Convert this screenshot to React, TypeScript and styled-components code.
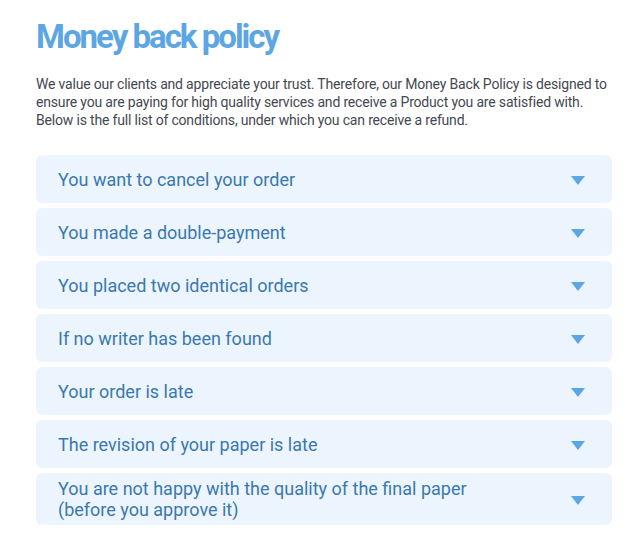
import React from "react";
import styled, { createGlobalStyle } from "styled-components";

const Global = createGlobalStyle`
  html, body { margin: 0; padding: 0; background: #fff; }
  body { font-family: Roboto, "Liberation Sans", Arial, sans-serif; }
`;

const Page = styled.div`
  padding: 16px 27px 0 36px;
`;

const Title = styled.h1`
  margin: 0;
  font-size: 33px;
  line-height: 42px;
  font-weight: 700;
  color: #5ba6e3;
  letter-spacing: -2px;
`;

const Intro = styled.p`
  margin: 17px 0 0;
  font-size: 14px;
  line-height: 18px;
  letter-spacing: -0.18px;
  color: #444851;
`;

const List = styled.div`
  margin-top: 26px;
  display: flex;
  flex-direction: column;
  gap: 5px;
`;

const Item = styled.div`
  display: flex;
  align-items: center;
  justify-content: space-between;
  min-height: 48px;
  box-sizing: border-box;
  padding: 5px 27px 5px 22px;
  background: #ecf5fd;
  border-radius: 6px;
`;

const Label = styled.span`
  font-size: 18px;
  line-height: 21px;
  color: #3a78b0;
`;

const Arrow = styled.span`
  width: 0;
  height: 0;
  margin-top: 3px;
  border-left: 7px solid transparent;
  border-right: 7px solid transparent;
  border-top: 9px solid #5ba6e3;
  flex-shrink: 0;
`;

const items = [
  "You want to cancel your order",
  "You made a double-payment",
  "You placed two identical orders",
  "If no writer has been found",
  "Your order is late",
  "The revision of your paper is late",
  <>You are not happy with the quality of the final paper<br />(before you approve it)</>,
];

export default function App() {
  return (
    <>
      <Global />
      <Page>
        <Title>Money back policy</Title>
        <Intro>
          We value our clients and appreciate your trust. Therefore, our Money Back Policy is designed to
          ensure you are paying for high quality services and receive a Product you are satisfied with.
          Below is the full list of conditions, under which you can receive a refund.
        </Intro>
        <List>
          {items.map((t, i) => (
            <Item key={i}>
              <Label>{t}</Label>
              <Arrow />
            </Item>
          ))}
        </List>
      </Page>
    </>
  );
}
